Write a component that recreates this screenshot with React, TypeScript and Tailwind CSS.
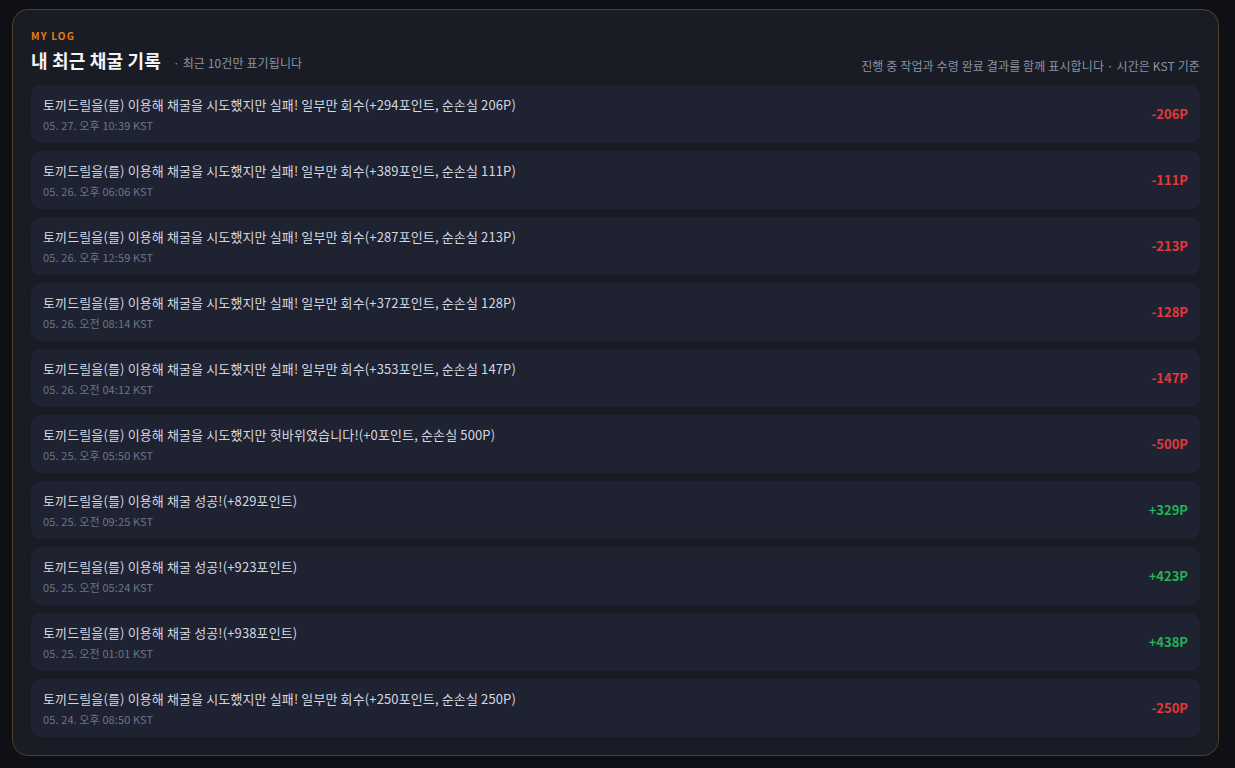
const logs = [
  { text: '토끼드릴을(를) 이용해 채굴을 시도했지만 실패! 일부만 회수(+294포인트, 순손실 206P)', time: '05. 27. 오후 10:39 KST', amount: -206 },
  { text: '토끼드릴을(를) 이용해 채굴을 시도했지만 실패! 일부만 회수(+389포인트, 순손실 111P)', time: '05. 26. 오후 06:06 KST', amount: -111 },
  { text: '토끼드릴을(를) 이용해 채굴을 시도했지만 실패! 일부만 회수(+287포인트, 순손실 213P)', time: '05. 26. 오후 12:59 KST', amount: -213 },
  { text: '토끼드릴을(를) 이용해 채굴을 시도했지만 실패! 일부만 회수(+372포인트, 순손실 128P)', time: '05. 26. 오전 08:14 KST', amount: -128 },
  { text: '토끼드릴을(를) 이용해 채굴을 시도했지만 실패! 일부만 회수(+353포인트, 순손실 147P)', time: '05. 26. 오전 04:12 KST', amount: -147 },
  { text: '토끼드릴을(를) 이용해 채굴을 시도했지만 헛바위였습니다!(+0포인트, 순손실 500P)', time: '05. 25. 오후 05:50 KST', amount: -500 },
  { text: '토끼드릴을(를) 이용해 채굴 성공!(+829포인트)', time: '05. 25. 오전 09:25 KST', amount: 329 },
  { text: '토끼드릴을(를) 이용해 채굴 성공!(+923포인트)', time: '05. 25. 오전 05:24 KST', amount: 423 },
  { text: '토끼드릴을(를) 이용해 채굴 성공!(+938포인트)', time: '05. 25. 오전 01:01 KST', amount: 438 },
  { text: '토끼드릴을(를) 이용해 채굴을 시도했지만 실패! 일부만 회수(+250포인트, 순손실 250P)', time: '05. 24. 오후 08:50 KST', amount: -250 }
];

type LogRowProps = {
  text: string;
  time: string;
  amount: number;
};

function LogRow(props: LogRowProps) {
  const { text, time, amount } = props;
  const isGain = amount > 0;

  return (
    <li className="flex h-[58px] items-center justify-between rounded-[10px] bg-[#1f2230] pl-3 pr-3">
      <div className="flex flex-col gap-1">
        <span className="text-[13px] leading-[18px] tracking-[0.01em] text-[#d3d7e0]">{text}</span>
        <span className="text-[11px] leading-[15px] tracking-[0.01em] text-[#6b7689]">{time}</span>
      </div>
      <span className={isGain ? 'text-[13px] font-bold text-[#22b455]' : 'text-[13px] font-bold text-[#e5383b]'}>
        {isGain ? `+${amount}P` : `${amount}P`}
      </span>
    </li>
  );
}

export default function App() {
  return (
    <div
      className="min-h-screen bg-[#0e1015] pb-[13px] pl-3 pr-4 pt-[9px]"
      style={{ fontFamily: '"Noto Sans CJK KR", "Noto Sans", sans-serif' }}
    >
      <section className="rounded-2xl border border-[#4e4125] bg-[#191c25] px-[18px] pb-[18px] pt-[19px]">
        <div className="text-[10px] font-bold leading-[14px] tracking-[0.12em] text-[#f07a12]">MY LOG</div>

        <header className="mt-[5px] flex items-end justify-between">
          <div className="flex items-end gap-3">
            <h2 className="text-[18px] font-bold leading-[24px] tracking-[0.01em] text-[#f3f4f6]">내 최근 채굴 기록</h2>
            <span className="text-[12px] leading-[18px] tracking-[0.01em] text-[#8a93a3]">· 최근 10건만 표기됩니다</span>
          </div>
          <span className="-mb-[3px] text-[12px] leading-[18px] tracking-[0.01em] text-[#8a93a3]">
            진행 중 작업과 수령 완료 결과를 함께 표시합니다 · 시간은 KST 기준
          </span>
        </header>

        <ul className="mt-[13px] flex flex-col gap-2">
          {logs.map((log, i) => (
            <LogRow key={i} text={log.text} time={log.time} amount={log.amount} />
          ))}
        </ul>
      </section>
    </div>
  );
}
